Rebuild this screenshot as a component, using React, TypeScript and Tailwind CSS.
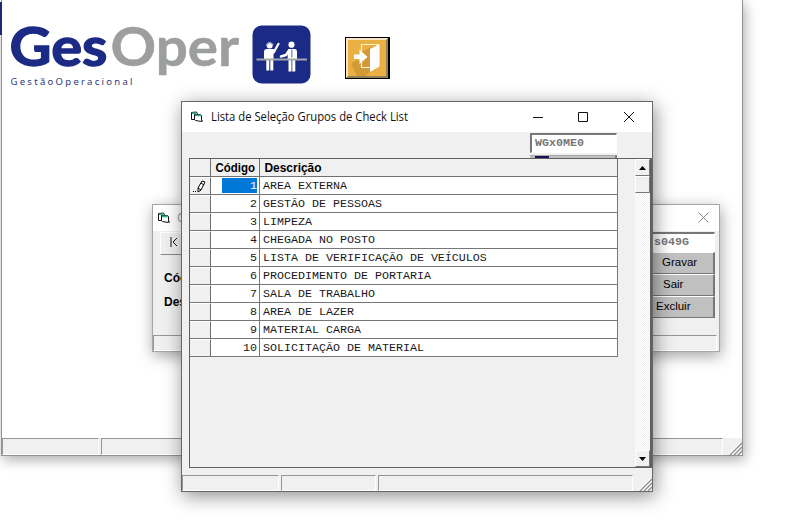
import React from 'react';

const ROWS = [
  'AREA EXTERNA',
  'GESTÃO DE PESSOAS',
  'LIMPEZA',
  'CHEGADA NO POSTO',
  'LISTA DE VERIFICAÇÃO DE VEÍCULOS',
  'PROCEDIMENTO DE PORTARIA',
  'SALA DE TRABALHO',
  'AREA DE LAZER',
  'MATERIAL CARGA',
  'SOLICITAÇÃO DE MATERIAL',
];

const MONO = "font-['Liberation_Mono',monospace] text-[11.67px]";
const SANS = "font-['Liberation_Sans',sans-serif]";

function FormIcon() {
  return (
    <svg width="15" height="12" viewBox="0 0 15 12" className="shrink-0">
      <path d="M2.500 1.500l5-.5 1 2v5.500h-6z" fill="#fff" stroke="#111" />
      <path d="M3 1.500h4v1.500H3z" fill="#2fae94" />
      <path d="M5.500 3.500h6l1 1v6l-6-1-1-1z" fill="#fff" stroke="#111" />
      <path d="M6 3.600h5.500l.5 1.600H6z" fill="#2fae94" />
      <path d="M12.500 9h1.500v2h-1.500z" fill="#8c6a70" />
    </svg>
  );
}

function Grip() {
  return (
    <svg width="13" height="13" viewBox="0 0 13 13" className="shrink-0 self-end">
      <path d="M1 12L12 1M5 12L12 5M9 12L12 9" stroke="#fff" strokeWidth="2.5" />
      <path d="M1 13L13 1M5 13L13 5M9 13L13 9" stroke="#8b8b8b" strokeWidth="1.3" />
    </svg>
  );
}

function Panel({ className }: { className: string }) {
  return <div className={`h-full border border-t-[#969696] border-l-[#969696] border-r-white border-b-white ${className}`} />;
}

function ScrollButton({ up }: { up?: boolean }) {
  return (
    <div className="flex h-[17px] w-full shrink-0 items-center justify-center border border-t-white border-l-white border-r-[#777] border-b-[#777] bg-[#f0f0f0]">
      <svg width="7" height="4" viewBox="0 0 7 4">
        <path d={up ? 'M0 4L3.5 0L7 4z' : 'M0 0L3.5 4L7 0z'} fill="#000" />
      </svg>
    </div>
  );
}

function Logo() {
  return (
    <svg width="240" height="92" viewBox="0 0 240 92" className="shrink-0">
      <g fontFamily="Lato, sans-serif" fontSize="54" fontWeight="700">
        <text x="9.500" y="65.500" textLength="98" lengthAdjust="spacingAndGlyphs" fill="#1b2a84" stroke="#1b2a84" strokeWidth="1.3">Ges</text>
        <text x="110.500" y="65.500" textLength="128.500" lengthAdjust="spacingAndGlyphs" fill="#9c9ea0" stroke="#9c9ea0" strokeWidth=".5">Oper</text>
      </g>
      <text x="10.5" y="84.500" textLength="122" fontFamily="'Noto Sans', sans-serif" fontSize="9.500" fill="#2b3978">GestãoOperacional</text>
    </svg>
  );
}

function CounterBadge() {
  return (
    <svg width="59" height="59" viewBox="0 0 59 59" className="mt-[24.5px] ml-[12px] shrink-0">
      <rect x="0.500" y="0.500" width="58" height="58" rx="9" fill="#1b2a84" />
      <circle cx="17.700" cy="20.500" r="3" fill="#fff" />
      <path d="M14.500 20q3.200-4.500 6.500 0" fill="none" stroke="#a3abc9" strokeWidth="1.600" />
      <path d="M22 27L26.500 18.800" stroke="#fff" strokeWidth="2.200" strokeLinecap="round" />
      <g fill="#fff">
        <path d="M12 27q0-3 3-3h6q2 0 2 3l-1.500 2v5H12z" />
        <path d="M14.300 35h3v10.500h-3zM18.300 35h3v10.500h-3z" />
        <circle cx="39.500" cy="19.700" r="3.100" />
        <path d="M36.300 24h6.200q2.500 0 2.500 3v7h-9.500z" />
        <path d="M36.500 35h3v11.500h-3zM40.300 35h3v11.500h-3z" />
      </g>
      <path d="M37 25.500L34 30l-5 1.500" fill="none" stroke="#fff" strokeWidth="2.500" strokeLinecap="round" strokeLinejoin="round" />
      <path d="M39.800 24.500v8" stroke="#7880ae" strokeWidth="1.200" />
      <path d="M4.500 34.500h50.500" stroke="#a5a7aa" strokeWidth="2" />
    </svg>
  );
}

function ExitButton() {
  return (
    <div className="mt-[37px] ml-[34px] h-[42px] w-[45px] shrink-0 border border-r-2 border-black bg-[#eab044]">
      <div className="h-full w-full border-2 border-t-[#f5e6c6] border-l-[#f5e6c6] border-r-[#92815c] border-b-[#92815c]">
        <svg width="38" height="36" viewBox="0 0 38 36">
          <path d="M3 24L8 20l5 1 2-10L28 5v22L17 36H9z" fill="#bd872e" opacity=".55" />
          <path d="M13.500 11V4.500H30M13.500 22v5.500h9" fill="none" stroke="#fff1cb" strokeWidth="1.200" />
          <path d="M22 9l9.500-5v22.500L22 32z" fill="#fff" />
          <path d="M6 14.500h5.500v-5l8 7.500-8 7v-5H6z" fill="#fff" />
        </svg>
      </div>
    </div>
  );
}

function MainWindow() {
  return (
    <div className="absolute top-0 left-px flex h-[456px] w-[742px] flex-col border border-t-0 border-[#929292] bg-white shadow-[2px_4px_12px_rgba(0,0,0,0.32)]">
      <div className="-ml-[2px] flex h-[438px] items-start">
        <Logo />
        <CounterBadge />
        <ExitButton />
      </div>
      <div className="flex h-[17px] bg-[#f0f0f0]">
        <Panel className="w-[97px]" />
        <Panel className="ml-[2px] w-[622px]" />
        <div className="flex flex-1 justify-end"><Grip /></div>
      </div>
    </div>
  );
}

function CommandButton({ label, className }: { label: string; className: string }) {
  return (
    <div className={`flex h-[22px] items-center border-t border-r-2 border-b border-t-white border-r-[#777] border-b-[#777] bg-[#c0c0c0] text-[11.5px] text-black ${className}`}>
      {label}
    </div>
  );
}

function RecordWindow() {
  return (
    <div className={`absolute top-[204px] left-[152px] flex h-[148px] w-[568px] flex-col border border-[#a5a5a5] bg-[#f0f0f0] shadow-[1px_4px_14px_rgba(0,0,0,0.36)] ${SANS}`}>
      <div className="flex h-[26px] shrink-0 items-center bg-white pl-[3px]">
        <FormIcon />
        <span className="ml-[6px] font-['Open_Sans',sans-serif] text-[12px] text-[#999]">C</span>
        <svg width="11" height="11" viewBox="0 0 11 11" className="mr-[10px] mb-[2px] ml-auto">
          <path d="M.5 .5l10 10M10.500 .5l-10 10" stroke="#888" />
        </svg>
      </div>
      <div className="flex flex-1 justify-between">
        <div className="pl-[7px]">
          <div className="mt-px flex h-[23px] w-[40px] items-center border border-t-white border-l-white border-b-[#888] pb-[3px] pl-[9px]">
            <svg width="8" height="10" viewBox="0 0 8 10"><path d="M1 0v10M7 1L3 5l4 4" fill="none" stroke="#111" /></svg>
          </div>
          <div className="mt-[14px] pl-[4px] text-[12px] leading-[18px] font-bold text-black">Código</div>
          <div className="mt-[6px] pl-[4px] text-[12px] leading-[18px] font-bold text-black">Descrição</div>
        </div>
        <div className="mr-[4px] w-[86px]">
          <div className={`mt-px flex h-[20px] items-center justify-end border border-t-2 border-t-[#777] border-l-[#777] border-r-white border-b-white bg-white pr-[25px] font-bold text-[#777] ${MONO}`}>s049G</div>
          <CommandButton label="Gravar" className="pl-[33px]" />
          <CommandButton label="Sair" className="pl-[34px]" />
          <CommandButton label="Excluir" className="pl-[27px]" />
        </div>
      </div>
      <div className="flex h-[16px] shrink-0 pr-[2px]"><Panel className="w-full" /></div>
    </div>
  );
}

function Pencil() {
  return (
    <svg width="14" height="13" viewBox="0 0 14 13">
      <path d="M5 8l4-7 3 1-4 8-3 2z" fill="#fff" stroke="#000" />
      <path d="M8 3l3 2M5 8l3 2" stroke="#000" />
      <path d="M0 11h1v1H0zM2 11h1v1H2z" fill="#000" />
    </svg>
  );
}

function Grid() {
  return (
    <div className="w-[428px]">
      <div className={`flex h-[18px] border-b border-[#707070] text-[12px] font-bold text-black ${SANS}`}>
        <div className="w-[21px] border-r border-[#707070]" />
        <div className="flex w-[49px] items-center justify-end border-r border-[#707070] pr-[3px]">
          <svg width="41" height="17"><text x="0.5" y="13" textLength="39.5" lengthAdjust="spacingAndGlyphs">Código</text></svg>
        </div>
        <div className="flex flex-1 items-center border-r border-[#707070] pl-[4px]">
          <svg width="60" height="17"><text x="0.5" y="13" textLength="57" lengthAdjust="spacingAndGlyphs">Descrição</text></svg>
        </div>
      </div>
      {ROWS.map((name, i) => (
        <div key={name} className={`flex h-[18px] border-b border-[#777] text-[#181818] ${MONO}`}>
          <div className="flex w-[21px] items-center justify-end border-t border-r border-t-white border-r-[#707070] bg-[#f0f0f0] pr-[3px]">
            {i === 0 && <Pencil />}
          </div>
          <div className="flex w-[49px] items-center justify-end border-r border-[#777] bg-white pr-[2px]">
            {i === 0 ? (
              <span className="h-[15px] w-[35px] bg-[#0078d7] text-right leading-[17px] text-white">1</span>
            ) : (
              <span className="pt-[2px]">{i + 1}</span>
            )}
          </div>
          <div className="flex flex-1 items-center border-r border-[#777] bg-white pt-[2px] pl-[3px] whitespace-pre">{name}</div>
        </div>
      ))}
    </div>
  );
}

function ListWindow() {
  return (
    <div className="absolute top-[101px] left-[181px] flex h-[391px] w-[472px] flex-col border border-[#686868] bg-[#f0f0f0] shadow-[2px_4px_18px_rgba(0,0,0,0.45)]">
      <div className="flex h-[30px] shrink-0 items-center bg-white pl-[7px]">
        <FormIcon />
        <svg width="215" height="20" className="ml-[7px]">
          <text x="0" y="14" textLength="197" lengthAdjust="spacingAndGlyphs" fontFamily="'Open Sans', sans-serif" fontSize="12" fill="#111">Lista de Seleção Grupos de Check List</text>
        </svg>
        <svg width="104" height="12" viewBox="0 0 104 12" className="mr-[16px] mb-px ml-auto" fill="none" stroke="#111">
          <path d="M1 6.500h10M46.500 1.500h9v9h-9zM92 1l10 10M102 1L92 11" />
        </svg>
      </div>
      <div className="flex h-[26px] shrink-0 flex-col pl-[348px]">
        <div className={`mt-px flex h-[20px] w-[87px] shrink-0 items-center border-t-2 border-r border-b border-l-2 border-t-[#777] border-l-[#777] border-r-white border-b-white bg-white pt-px pl-[3px] font-bold text-[#777] ${MONO}`}>WGx0ME0</div>
        <div className="mt-[2px] flex h-[3px] w-[87px] border-t border-r-2 border-t-[#aaa] border-r-[#777] bg-[#c0c0c0] pl-[5px]">
          <div className="h-full w-[14px] bg-[#171352]" />
        </div>
      </div>
      <div className="ml-[7px] flex h-[310px] w-[463px] shrink-0 justify-between border border-r-2 border-[#606060]">
        <Grid />
        <div className="flex w-[15px] flex-col bg-[repeating-conic-gradient(#ffffff_0_25%,#f0f0f0_0_50%)] bg-[length:2px_2px]">
          <ScrollButton up />
          <div className="h-[17px] border border-t-white border-l-white border-r-[#777] border-b-[#777] bg-[#f0f0f0]" />
          <div className="flex-1" />
          <ScrollButton />
        </div>
      </div>
      <div className="mt-[7px] flex h-[16px]">
        <Panel className="w-[97px]" />
        <Panel className="ml-[2px] w-[95px]" />
        <Panel className="ml-[2px] w-[255px]" />
        <div className="flex flex-1 justify-end"><Grip /></div>
      </div>
    </div>
  );
}

export default function App() {
  return (
    <div className="relative h-[523px] w-[788px] overflow-hidden bg-white">
      <MainWindow />
      <div className="absolute top-[2px] left-0 h-[33px] w-[2px] bg-[#1b2a74]" />
      <RecordWindow />
      <ListWindow />
    </div>
  );
}
